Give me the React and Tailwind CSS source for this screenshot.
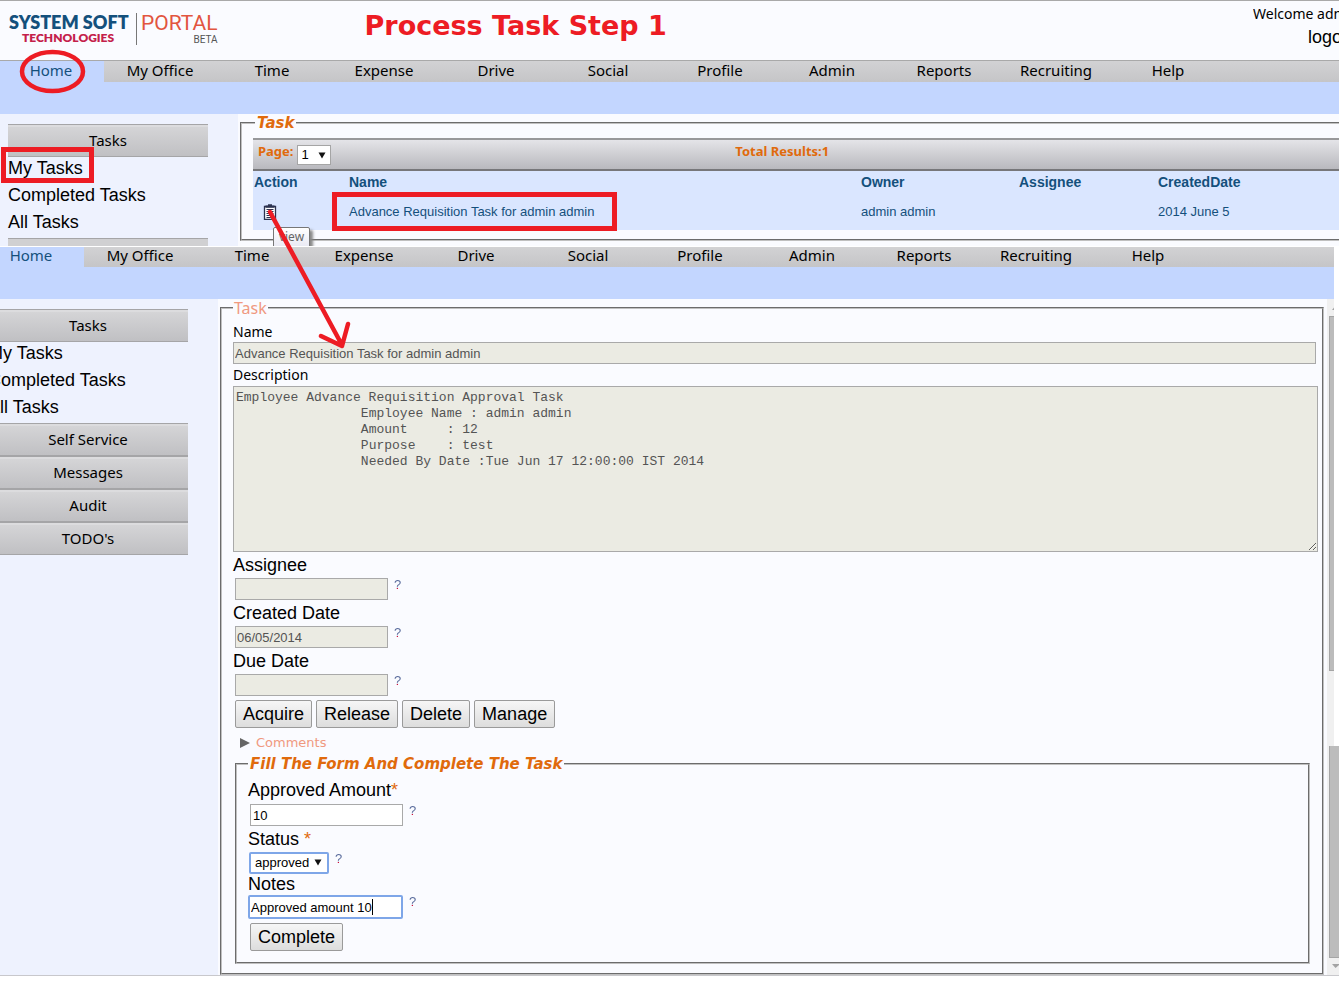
import React from "react";

const NAV = ["My Office", "Time", "Expense", "Drive", "Social", "Profile", "Admin", "Reports", "Recruiting", "Help"];
const LINKS = ["My Tasks", "Completed Tasks", "All Tasks"];

const DESCRIPTION = [
  "Employee Advance Requisition Approval Task",
  "                Employee Name : admin admin",
  "                Amount     : 12",
  "                Purpose    : test",
  "                Needed By Date :Tue Jun 17 12:00:00 IST 2014",
].join("\n");

function NavBar({ className, label }) {
  return (
    <nav aria-label={label} className={`flex overflow-hidden bg-linear-to-b from-[#d2d2d4] to-[#c5c5c7] font-['Noto_Sans',sans-serif] text-[15px] text-black ${className}`}>
      <a href="#home" className="w-[104px] shrink-0 bg-[#c3d6ff] pr-0.5 text-center text-[#14507c]">Home</a>
      {NAV.map((item) => (
        <a key={item} href="#nav" className="w-28 shrink-0 text-center">{item}</a>
      ))}
    </nav>
  );
}

function SideButton({ children }) {
  return (
    <button type="button" className="block h-[33px] w-full border-y border-[#a5a5a7] bg-linear-to-b from-[#d6d6d8] to-[#c0c0c3] text-center font-['Noto_Sans',sans-serif] text-[15px] text-black inset-shadow-[0_2px_0_#dcdcde]">
      {children}
    </button>
  );
}

function TaskLinks() {
  return (
    <ul className="text-lg leading-[23px] text-black">
      {LINKS.map((l) => (
        <li key={l} className="pb-1"><a href="#tasks" className="whitespace-nowrap">{l}</a></li>
      ))}
    </ul>
  );
}

function Help() {
  return (
    <span className="ml-1.5 bg-linear-to-b from-[#56689a] from-70% to-[#d0103c] to-70% bg-clip-text text-[13px] leading-[14px] text-transparent">?</span>
  );
}

function Field({ id, label, value = "" }) {
  return (
    <div>
      <label htmlFor={id} className="block text-lg leading-[26px] text-black">{label}</label>
      <div className="ml-0.5 flex items-start">
        <input id={id} readOnly defaultValue={value} className="h-[22px] w-[153px] border border-[#a9a9a9] bg-[#ebebe3] px-px text-[13px] text-[#545454]" />
        <Help />
      </div>
    </div>
  );
}

function PushButton({ children }) {
  return (
    <button type="button" className="h-7 rounded-xs border border-[#9a9a9a] bg-linear-to-b from-[#f6f6f6] to-[#dddddd] px-[7px] text-lg leading-[26px] text-black">
      {children}
    </button>
  );
}

function DownArrow({ className }) {
  return (
    <svg viewBox="0 0 8 7" className={`pointer-events-none absolute h-[7px] w-2 ${className}`} aria-hidden="true">
      <path d="M0.5 0.5H7.5L4 6.5Z" fill="#111" />
    </svg>
  );
}

function Logo() {
  return (
    <div className="ml-[9px] flex items-start pt-3 font-['Lato',sans-serif] whitespace-nowrap">
      <div className="flex w-32 flex-col items-start border-r border-[#777] pb-px">
        <span className="text-[18px] leading-[19px] font-extrabold text-[#14507c]">SYSTEM SOFT</span>
        <span className="ml-[13px] text-xs leading-3 font-extrabold text-[#c4204a]">TECHNOLOGIES</span>
      </div>
      <div className="ml-1 flex flex-col items-end font-['Roboto',sans-serif]">
        <span className="text-[21px] leading-[21px] text-[#e2553f]">PORTAL</span>
        <span className="text-[10px] leading-[11px] text-[#555]">BETA</span>
      </div>
    </div>
  );
}

function TaskList() {
  return (
    <fieldset className="ml-0.5 h-[127px] min-w-0 border-2 border-r-0 border-[#c0c0c0] pl-[11px] [border-style:groove]">
      <legend className="ml-0.5 px-0.5 font-['DejaVu_Sans',sans-serif] text-[15px] leading-[18px] font-bold text-[#e06a0c] italic">Task</legend>
      <div className="mt-1.5 flex h-[33px] items-start border-t-2 border-b-2 border-t-[#98989a] border-b-[#77777a] bg-linear-to-b from-[#e4e4e8] to-[#b9b9be] font-['Noto_Sans',sans-serif] text-[13px] leading-[22px] font-bold text-[#e06a0c]">
        <label htmlFor="page" className="pl-[5px]">Page:</label>
        <span className="relative mt-[5px] ml-[3px]">
          <select id="page" className="block h-5 w-[34px] appearance-none border border-[#a5a5a5] bg-white px-1 font-['Liberation_Sans',sans-serif] text-[13px] leading-4 font-normal text-black">
            <option>1</option>
          </select>
          <DownArrow className="top-[7px] right-[5px]" />
        </span>
        <span className="grow pr-[105px] text-center">Total Results:1</span>
      </div>
      <table className="w-full table-fixed bg-[#dae6ff] text-left text-[#14507c]">
        <colgroup>
          <col className="w-[95px]" />
          <col />
          <col className="w-[158px]" />
          <col className="w-[139px]" />
          <col className="w-[182px]" />
        </colgroup>
        <thead>
          <tr className="h-[22px] text-sm leading-5">
            {["Action", "Name", "Owner", "Assignee", "CreatedDate"].map((h) => (
              <th key={h} className="p-0 pl-px font-bold">{h}</th>
            ))}
          </tr>
        </thead>
        <tbody>
          <tr className="h-[37px] text-[13px]">
            <td className="p-0 pl-[10px]">
              <button type="button" aria-label="View task" className="block">
                <svg viewBox="0 0 14 16" className="h-4 w-3.5" aria-hidden="true">
                  <path d="M1.500 2.500H12.500V15.300H1.500Z" fill="#fff" stroke="#2c3350" strokeWidth="1.300" />
                  <path d="M2.500 1.500H5V0.200H9V1.500H11.500V3.800H2.500Z" fill="#2c3350" />
                  <path d="M3.500 5.500H10.500M3.500 7.500H10.500M3.500 9.500H10.500M3.500 11.500H10.500M3.500 13.500H8" stroke="#2c3350" />
                </svg>
              </button>
            </td>
            <td className="p-0 pl-px">Advance Requisition Task for admin admin</td>
            <td className="p-0 pl-px">admin admin</td>
            <td />
            <td className="p-0 pl-px">2014 June 5</td>
          </tr>
        </tbody>
      </table>
    </fieldset>
  );
}

function CompleteForm() {
  return (
    <fieldset className="mt-0.5 mr-3 ml-0.5 min-w-0 border-2 border-[#c0c0c0] pb-[11px] pl-[11px] [border-style:groove]">
      <legend className="px-0.5 font-['DejaVu_Sans',sans-serif] text-[15px] leading-[18px] font-bold text-[#e06a0c] italic">Fill The Form And Complete The Task</legend>
      <label htmlFor="amount" className="mt-1 block text-lg leading-[26px] text-black">
        Approved Amount<span className="text-[#e06a0c]">*</span>
      </label>
      <div className="mt-px ml-0.5 flex items-start">
        <input id="amount" defaultValue="10" className="h-[22px] w-[153px] border border-[#a9a9a9] bg-white px-0.5 text-[13px] text-black" />
        <Help />
      </div>
      <label htmlFor="status" className="block text-lg leading-[26px] text-black">
        Status <span className="text-[#e06a0c]">*</span>
      </label>
      <div className="ml-px flex items-start">
        <span className="relative">
          <select id="status" defaultValue="approved" className="block h-[22px] w-20 appearance-none rounded-xs border-2 border-[#7ea6e8] bg-white px-1 text-[13px] leading-[18px] text-black outline-none">
            <option>approved</option>
            <option>rejected</option>
          </select>
          <DownArrow className="top-[7px] right-[7px]" />
        </span>
        <Help />
      </div>
      <label htmlFor="notes" className="block text-lg leading-[21px] text-black">Notes</label>
      <div className="flex items-start">
        <span className="relative">
          <input id="notes" defaultValue="Approved amount 10" className="block h-6 w-[155px] rounded-xs border-2 border-[#7ea6e8] bg-white px-px text-[13px] text-black outline-none" />
          <span className="absolute top-1 left-[124px] h-4 w-px bg-black" />
        </span>
        <Help />
      </div>
      <div className="mt-1 ml-0.5"><PushButton>Complete</PushButton></div>
    </fieldset>
  );
}

function TaskDetail() {
  return (
    <fieldset className="mr-[3px] ml-0.5 min-w-0 border-2 border-[#c0c0c0] pb-[9px] pl-[11px] [border-style:groove]">
      <legend className="px-px font-['Noto_Sans',sans-serif] text-base leading-[18px] text-[#f0997f]">Task</legend>
      <label htmlFor="name" className="mt-[5px] block font-['Noto_Sans',sans-serif] text-sm leading-5 text-black">Name</label>
      <div className="pr-1.5">
        <input id="name" readOnly defaultValue="Advance Requisition Task for admin admin" className="block h-[22px] w-full border border-[#a9a9a9] bg-[#ebebe3] px-px text-[13px] text-[#545454]" />
      </div>
      <label htmlFor="description" className="block font-['Noto_Sans',sans-serif] text-sm leading-[22px] text-black">Description</label>
      <div className="pr-1">
        <textarea id="description" readOnly defaultValue={DESCRIPTION} className="block h-[166px] w-full resize border border-[#a9a9a9] bg-[#ebebe3] px-0.5 pt-[3px] font-['Liberation_Mono',monospace] text-[13px] leading-4 text-[#545454]" />
      </div>
      <Field id="assignee" label="Assignee" />
      <Field id="created" label="Created Date" value="06/05/2014" />
      <Field id="due" label="Due Date" />
      <div className="mt-1 ml-0.5 flex gap-1">
        <PushButton>Acquire</PushButton>
        <PushButton>Release</PushButton>
        <PushButton>Delete</PushButton>
        <PushButton>Manage</PushButton>
      </div>
      <button type="button" className="mt-[5px] ml-[7px] flex items-center gap-1.5 font-['DejaVu_Sans',sans-serif] text-[13px] leading-5 text-[#f0997f]">
        <svg viewBox="0 0 10 10" className="size-2.5" aria-hidden="true"><path d="M0 0L10 5L0 10Z" fill="#666" /></svg>
        Comments
      </button>
      <CompleteForm />
    </fieldset>
  );
}

function Annotations() {
  return (
    <svg className="pointer-events-none absolute top-0 left-0 h-[360px] w-[640px]" viewBox="0 0 640 360" fill="none" stroke="#ed1c24" aria-hidden="true">
      <ellipse cx="52.5" cy="71.5" rx="30.5" ry="19.5" strokeWidth="4.5" />
      <rect x="3.5" y="149.5" width="88" height="31" strokeWidth="5" />
      <rect x="334.5" y="194.5" width="280" height="34" strokeWidth="5" />
      <path d="M270 212L342 345M321 336L342 346L348 324" strokeWidth="4.5" strokeLinecap="round" strokeLinejoin="round" />
    </svg>
  );
}

export default function App() {
  return (
    <div className="relative overflow-hidden bg-white font-['Liberation_Sans',sans-serif]">
      <section className="relative h-[246px] overflow-hidden bg-[#fafbff]">
        <header className="flex h-[60px] justify-between border-t border-[#a9a9a9]">
          <div className="flex">
            <Logo />
            <h1 className="ml-[147px] font-['DejaVu_Sans',sans-serif] text-[27px] leading-[50px] font-bold whitespace-nowrap text-[#ed1c24]">Process Task Step 1</h1>
          </div>
          <div className="w-[86px] overflow-hidden pt-0.5 whitespace-nowrap text-black">
            <p className="font-['Noto_Sans',sans-serif] text-sm leading-[22px]">Welcome admin admin</p>
            <a href="#logout" className="ml-[55px] block text-lg leading-6">logout</a>
          </div>
        </header>
        <NavBar label="Main" className="h-[22px] border-t border-[#a9a9a9] leading-[18px]" />
        <div className="h-8 bg-[#c3d6ff]" />
        <div className="flex">
          <aside className="h-[132px] w-[238px] shrink-0 bg-[#eef2fe] pt-2.5 pr-[30px] pl-2">
            <SideButton>Tasks</SideButton>
            <TaskLinks />
            <div className="h-2 border-t border-[#a5a5a7] bg-[#d0d0d2]" />
          </aside>
          <main className="min-w-0 grow"><TaskList /></main>
        </div>
        <div role="tooltip" className="absolute top-[227px] left-[273px] h-6 w-[37px] rounded-xs border border-[#777] bg-linear-to-b from-white to-[#e6e6f2] text-center font-['Noto_Sans',sans-serif] text-xs leading-[18px] text-[#666] shadow-[3px_3px_3px_#888]">view</div>
      </section>

      <section className="overflow-hidden border-t border-white">
        <div className="mr-[5px] overflow-hidden">
          <NavBar label="Secondary" className="-ml-5 h-5 leading-4" />
          <div className="h-8 bg-[#c3d6ff]" />
        </div>
        <div className="flex border-b border-[#c8c8cc]">
          <aside className="w-[218px] shrink-0 overflow-hidden bg-[#eef2fe] pt-2.5 pr-[30px]">
            <div className="-ml-3">
              <SideButton>Tasks</SideButton>
              <TaskLinks />
              <SideButton>Self Service</SideButton>
              <SideButton>Messages</SideButton>
              <SideButton>Audit</SideButton>
              <SideButton>TODO's</SideButton>
            </div>
          </aside>
          <div className="min-w-0 grow bg-[#fafbff]"><TaskDetail /></div>
          <div className="flex w-3 shrink-0 flex-col" aria-hidden="true">
            <div className="mr-[5px] h-[447px] bg-[#f0f0f0] pl-0.5">
              <svg viewBox="0 0 5 17" className="h-[17px] w-[5px]"><path d="M3 11L5 8.500V11Z" fill="#a3a3a3" /></svg>
              <div className="h-[355px] border-y border-l border-[#a5a5a5] bg-[#bcbcbc]" />
            </div>
            <div className="grow bg-[#f0f0f0] pl-0.5">
              <div className="h-[212px] border-b border-l border-[#a5a5a5] bg-[#bcbcbc]" />
              <svg viewBox="0 0 10 16" className="h-4 w-2.5"><path d="M3 6H10V7L6.500 10Z" fill="#a3a3a3" /></svg>
            </div>
          </div>
        </div>
      </section>
      <Annotations />
    </div>
  );
}
